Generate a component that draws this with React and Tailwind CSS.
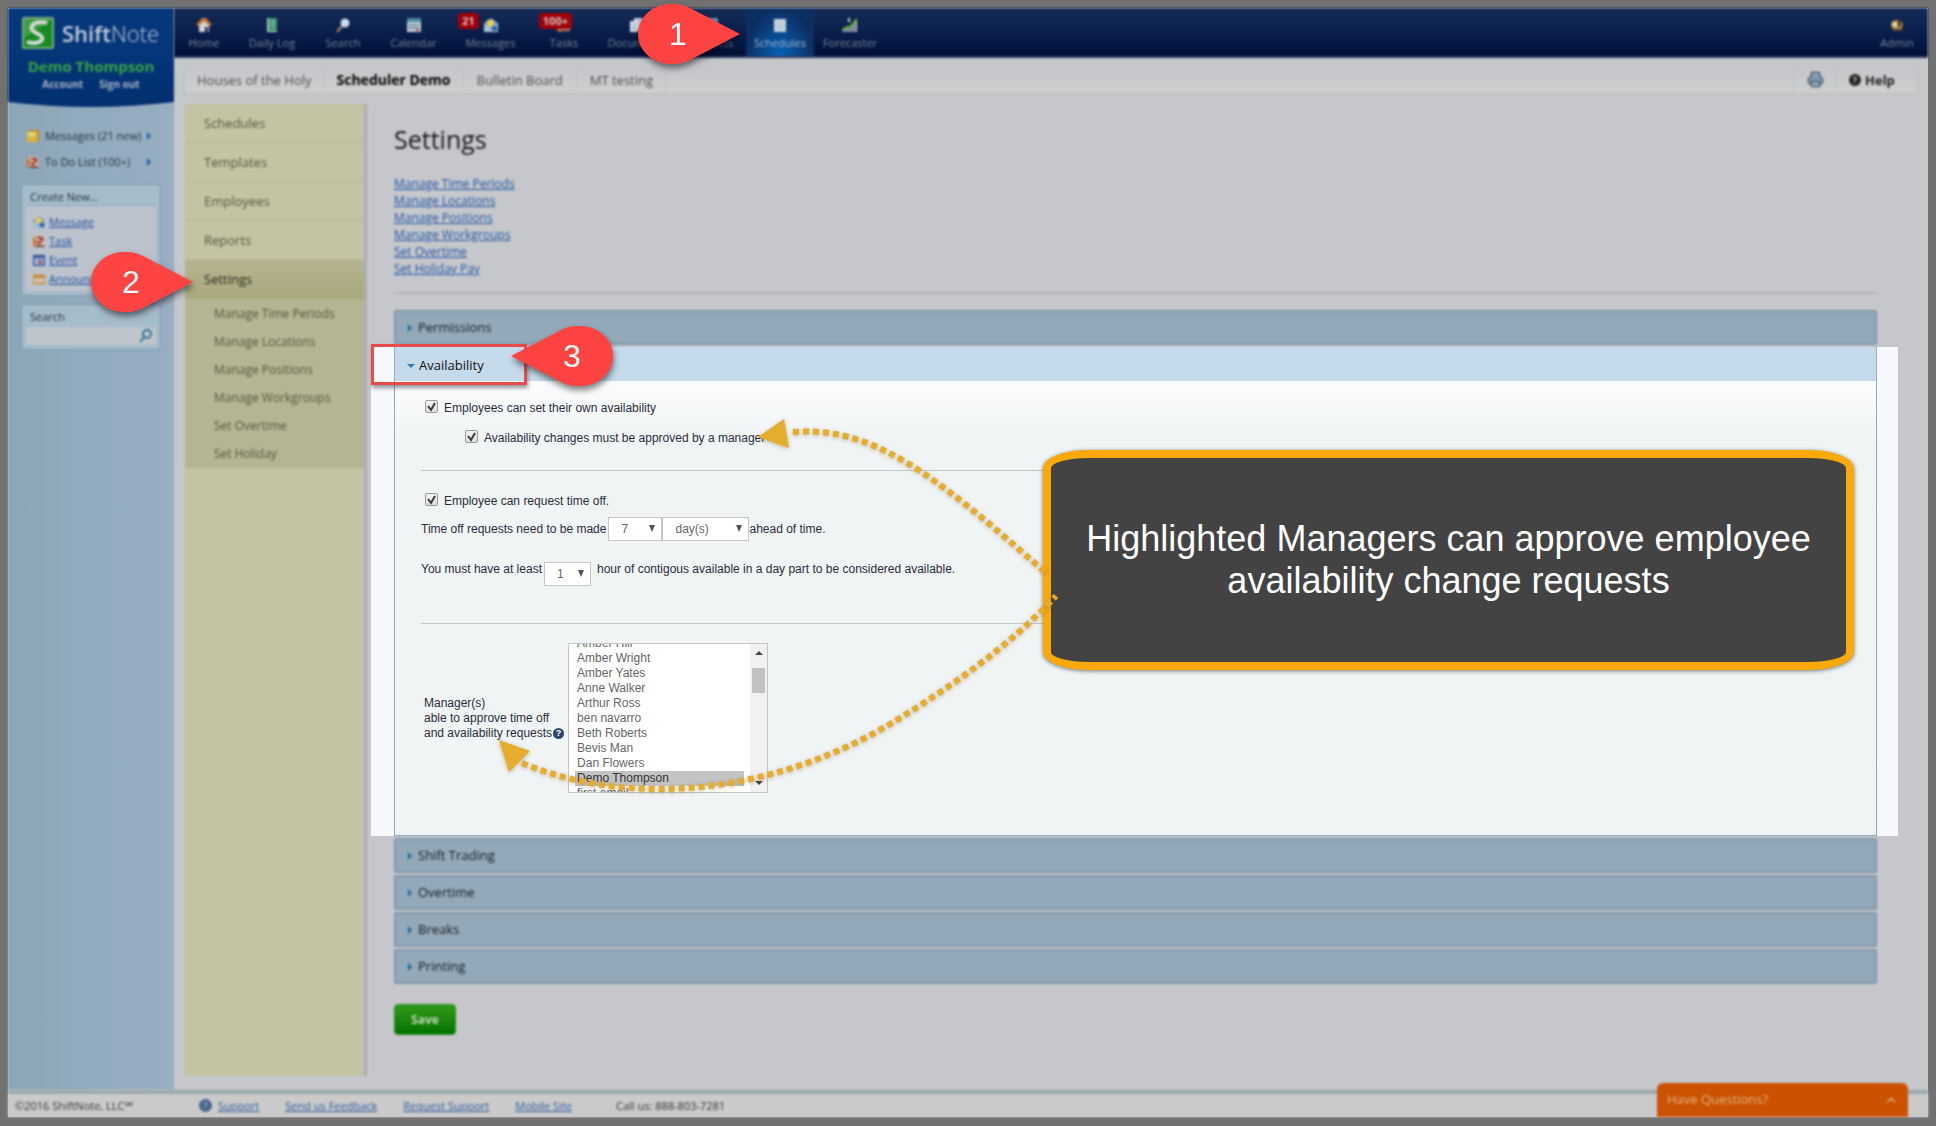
import { useEffect, useRef } from 'react';
import { Printer, ChevronUp } from 'lucide-react';

const topItems = [
  { label: 'Home', icon: 'home', width: 'w-[60px]' },
  { label: 'Daily Log', icon: 'book', width: 'w-[76px]' },
  { label: 'Search', icon: 'lens', width: 'w-[66px]' },
  { label: 'Calendar', icon: 'calendar', width: 'w-[75px]' },
  { label: 'Messages', icon: 'mail', width: 'w-[79px]', badge: '21', badgePos: 'right-5' },
  { label: 'Tasks', icon: 'task', width: 'w-[68px]', badge: '100+', badgePos: 'right-0' },
  { label: 'Documents', icon: 'docs', width: 'w-[78px]' },
  { label: 'Contacts', icon: 'contacts', width: 'w-[70px]' },
  { label: 'Schedules', icon: 'grid', width: 'w-[68px]', active: true },
  { label: 'Forecaster', icon: 'chart', width: 'w-[72px]' }
];

const sideItems = ['Schedules', 'Templates', 'Employees', 'Reports'];

const subItems = [
  'Manage Time Periods',
  'Manage Locations',
  'Manage Positions',
  'Manage Workgroups',
  'Set Overtime',
  'Set Holiday'
];

const settingLinks = [
  'Manage Time Periods',
  'Manage Locations',
  'Manage Positions',
  'Manage Workgroups',
  'Set Overtime',
  'Set Holiday Pay'
];

const managers = [
  'Amber Hill',
  'Amber Wright',
  'Amber Yates',
  'Anne Walker',
  'Arthur Ross',
  'ben navarro',
  'Beth Roberts',
  'Bevis Man',
  'Dan Flowers',
  'Demo Thompson',
  'first email'
];

const createItems = [
  { label: 'Message', icon: 'mail' },
  { label: 'Task', icon: 'task' },
  { label: 'Event', icon: 'event' },
  { label: 'Announce', icon: 'announce' }
];

const glyphs = {
  home: (
    <>
      <path d="M3 8v7h10V8L8 3z" fill="#d3d3d3" />
      <path d="M0 8 6 1h4l6 7-2 1-6-5-6 5z" fill="#c4762b" />
      <path d="M9 10h3v5H9z" fill="#27304a" />
    </>
  ),
  book: (
    <>
      <path d="M3 1h10v13H3z" fill="#3f8f74" />
      <path d="M3 1h2v14H3z" fill="#9fc8b8" />
      <path d="M7 4h4M7 7h4M8 10h2" stroke="#b9dccf" />
      <path d="M4 14h9v1H4z" fill="#ddd" />
    </>
  ),
  lens: (
    <>
      <path d="m7 9-5 6" stroke="#a7866b" strokeWidth="2" />
      <circle cx="10" cy="6" r="4" fill="#c9dcf0" stroke="#e2e2e2" />
    </>
  ),
  calendar: (
    <>
      <path d="M1 1h14v14H1z" fill="#c5ccd2" />
      <path d="M1 1h14v4H1z" fill="#4d8b9c" />
      <path d="M3 8h10M3 11h10" stroke="#5c7fa8" strokeWidth="2" strokeDasharray="2 1" />
      <path d="M10 12h3v2h-3z" fill="#b5523b" />
    </>
  ),
  mail: (
    <>
      <path d="M1 6 8 1l7 5v9H1z" fill="#6f9ac6" />
      <path d="M4 3h7v7H4z" fill="#e3cb62" />
      <path d="m1 7 6 5 8-6v9H1z" fill="#a9c3dc" />
      <path d="M9 9h5v5H9z" fill="#2c5fa3" />
    </>
  ),
  task: (
    <>
      <path d="M3 1h8l3 3v11H3z" fill="#c9b8b2" />
      <path d="M1 4h3v10H1z" fill="#c4762b" />
      <path d="M5 3h6l2 3H8z" fill="#9c3a2c" />
      <path d="m5 8 3 3 5-6" stroke="#b8321f" strokeWidth="2" fill="none" />
      <path d="M4 13h10v2H4z" fill="#6d4038" />
    </>
  ),
  docs: (
    <>
      <path d="M5 1h8l2 2v10H5z" fill="#b8c8dd" />
      <path d="M1 4h8v11H1z" fill="#dbe3ee" />
      <path d="M3 7h4M3 10h4M3 12h4" stroke="#7e94b5" />
    </>
  ),
  contacts: (
    <>
      <path d="M3 1h12v14H3z" fill="#6d93a6" />
      <circle cx="9" cy="6" r="2" fill="#dce5ea" />
      <path d="M5 12c0-4 8-4 8 0z" fill="#dce5ea" />
    </>
  ),
  grid: (
    <>
      <path d="M2 2h12v13H2z" fill="#c9d6e0" />
      <path d="M4 6h8M4 9h8M4 12h8M6 4v9M10 4v9" stroke="#b2c4d2" />
    </>
  ),
  chart: (
    <>
      <path d="M2 15v-3M5 15v-4M8 15V9M11 15V7M14 15V4" stroke="#b9c0c8" strokeWidth="2" />
      <path d="m0 13 5-3 3 0 7-8" stroke="#58a92e" strokeWidth="2" fill="none" />
      <path d="M6 1h2v4H6z" fill="#c8ccd2" />
    </>
  ),
  admin: (
    <>
      <ellipse cx="8" cy="8" rx="6" ry="5" fill="#a88642" />
      <path d="M4 12h9l1 2H3z" fill="#55452a" />
      <path d="M3 5h5v5H4z" fill="#dfd3a8" />
      <path d="M9 3h3v6H9z" fill="#4a3d28" />
    </>
  ),
  event: (
    <>
      <path d="M1 2h14v13H1z" fill="#3d5fa0" />
      <path d="M3 6h10v7H3z" fill="#c5d0e2" />
      <path d="M3 9h10M7 6v7M10 6v7" stroke="#5673ac" />
      <path d="M8 9h3v3H8z" fill="#b03c2c" />
    </>
  ),
  announce: (
    <>
      <path d="M1 3h14v11H1z" fill="#c98a3a" />
      <path d="M2 7h12v5H2z" fill="#d9cdb8" />
      <path d="M4 9h8" stroke="#8b97a8" strokeDasharray="2 1" />
    </>
  ),
  note: (
    <>
      <path d="M3 1h12v13H3z" fill="#b58f2a" />
      <path d="M1 3h12v12H1z" fill="#d6b640" />
      <path d="M2 4h9v4H2z" fill="#e6d684" />
    </>
  )
};

function Icon({ name, className }) {
  return (
    <svg viewBox="0 0 16 16" className={className} aria-hidden="true">
      {glyphs[name]}
    </svg>
  );
}

function Logo() {
  return (
    <a href="#" className="flex items-center gap-2 text-[22px] leading-8 text-[#c3cbd8]">
      <svg viewBox="0 0 33 33" className="size-8" aria-hidden="true">
        <rect width="33" height="33" rx="2" fill="#7dac7c" />
        <rect x="2" y="2" width="29" height="29" fill="#178a22" />
        <path d="M2 2h29L2 22z" fill="#3c9c45" />
        <path
          d="M26 6C15 4 9 7 10 12c1 5 11 5 11 10 0 4-7 6-16 4"
          fill="none"
          stroke="#d4dcd5"
          strokeWidth="4"
        />
      </svg>
      <span>
        <b className="font-semibold">Shift</b>
        <span className="font-light">Note</span>
      </span>
    </a>
  );
}

function TopBar() {
  return (
    <header className="flex h-[50px] justify-between border-b-2 border-[#2c3c60] bg-linear-to-b from-[#152b56] via-[#071a45] via-70% to-[#000e35] text-[11px] leading-3 text-[#76829b] blur-[1px]">
      <nav className="flex">
        {topItems.map((item) => (
          <a
            key={item.label}
            href="#"
            className={
              item.active
                ? `${item.width} flex flex-col items-center gap-1 bg-radial-[at_50%_100%] from-[#0562b8] to-[#0c2f62] to-70% pt-[9px] text-[#a3b6cf]`
                : `${item.width} flex flex-col items-center gap-1 pt-[9px]`
            }
          >
            <span className="relative">
              <Icon name={item.icon} className="size-4" />
              {item.badge && (
                <span className={`${item.badgePos} absolute -top-1 rounded-sm bg-[#a00008] px-1 text-[11px] leading-4 font-bold text-[#d6c3c5]`}>
                  {item.badge}
                </span>
              )}
            </span>
            {item.label}
          </a>
        ))}
      </nav>
      <a href="#" className="flex w-[62px] flex-col items-center gap-1 pt-[9px]">
        <Icon name="admin" className="size-4" />
        Admin
      </a>
    </header>
  );
}

function TabBar() {
  return (
    <div className="mx-[10px] mt-3 flex h-6 items-center border border-t-0 border-[#bbbcc0] bg-linear-to-b from-[#c6c7cb] to-[#cfcfcf] pb-1 text-[13px] leading-5 text-[#505050] blur-[1px]">
      <a href="#" className="border-r border-[#bbbcc0] px-3">Houses of the Holy</a>
      <a href="#" className="border-r border-[#bbbcc0] px-3 text-sm leading-5 font-bold text-black">
        Scheduler Demo
      </a>
      <a href="#" className="border-r border-[#bbbcc0] px-[13px]">Bulletin Board</a>
      <a href="#" className="border-r border-[#bbbcc0] px-[13px]">MT testing</a>
      <button type="button" aria-label="Print" className="ml-auto flex h-5 w-11 items-center justify-center border-x border-[#bbbcc0]">
        <Printer className="size-[17px] fill-[#8fa6bd] text-[#4c5a68]" />
      </button>
      <a href="#" className="flex w-20 items-center gap-1 pl-3 font-bold text-[#222]">
        <span className="flex size-3 items-center justify-center rounded-full bg-[#222] text-[9px] leading-3 text-[#cfcfcf]">?</span>
        Help
      </a>
    </div>
  );
}

function LeftColumn() {
  return (
    <aside className="w-[166px] shrink-0 bg-linear-to-r from-[#8ca7b8] to-[#98aec3] text-[11px] text-[#23303c] blur-[1px]">
      <div className="relative h-[94px] bg-linear-to-b from-[#05377a] from-40% to-[#033070] pt-[9px] pl-[14px]">
        <Logo />
        <div className="mt-[7px] -ml-[14px] text-center text-[15px] leading-5 font-bold text-[#37a546]">Demo Thompson</div>
        <div className="-ml-[14px] flex justify-center gap-4 text-[10px] leading-4 font-bold text-[#a9b5c9]">
          <a href="#">Account</a>
          <a href="#">Sign out</a>
        </div>
        <svg viewBox="0 0 166 6" preserveAspectRatio="none" className="absolute top-full left-0 h-[6px] w-full" aria-hidden="true">
          <path d="M0 0h166Q83 10 0 0" fill="#033070" />
        </svg>
      </div>

      <div className="mt-[26px] flex w-[143px] flex-col gap-[10px] pl-[18px] leading-4">
        <a href="#" className="flex items-center gap-[5px]">
          <Icon name="note" className="size-[14px]" />
          Messages (21 new)
          <i className="ml-auto border-y-4 border-l-4 border-y-transparent border-l-[#1c62a8]" />
        </a>
        <a href="#" className="flex items-center gap-[5px]">
          <Icon name="task" className="size-[14px]" />
          To Do List (100+)
          <i className="ml-auto border-y-4 border-l-4 border-y-transparent border-l-[#1c62a8]" />
        </a>
      </div>

      <section className="mx-[13px] mt-[14px] rounded-sm border border-[#7e9aad] bg-[#a5bccb] p-1">
        <h2 className="pl-1 text-[11px] leading-4">Create New...</h2>
        <ul className="flex flex-col gap-[3px] border-t border-[#8ea8b8] bg-[#bdc3cc] pt-2 pb-1 pl-[6px]">
          {createItems.map((item) => (
            <li key={item.label} className="flex items-center gap-[3px] text-[11px] leading-4">
              <Icon name={item.icon} className="size-[14px]" />
              <a href="#" className="text-[#1c4fa0] underline">{item.label}</a>
            </li>
          ))}
        </ul>
      </section>

      <section className="mx-[13px] mt-2 rounded-sm border border-[#7e9aad] bg-[#a5bccb] p-1">
        <label htmlFor="quick-search" className="block pl-1 text-[11px] leading-4">Search</label>
        <div className="mt-[2px] flex h-[18px] items-center bg-[#bec5cb]">
          <input id="quick-search" type="text" className="w-full min-w-0 px-1 outline-none" />
          <button type="button" aria-label="Search">
            <svg viewBox="0 0 16 16" className="mr-[2px] size-4" aria-hidden="true">
              <circle cx="9" cy="6" r="4" fill="none" stroke="#2e7099" strokeWidth="2" />
              <path d="m6 9-4 5" stroke="#2e7099" strokeWidth="2" />
            </svg>
          </button>
        </div>
      </section>
    </aside>
  );
}

function SideNav() {
  return (
    <nav className="w-[182px] shrink-0 border-r-[3px] border-[#abadb0] bg-[#c4c3a4] text-[13px] text-[#55563f] blur-[1px]">
      {sideItems.map((item) => (
        <a key={item} href="#" className="block h-[39px] border-b border-[#b8b895] pl-[19px] leading-[39px]">
          {item}
        </a>
      ))}
      <a href="#" className="block h-[39px] bg-linear-to-b from-[#b5b48f] to-[#a9a97f] pl-[19px] leading-[39px] font-medium text-[#262719]">
        Settings
      </a>
      <div className="bg-[#b5b593] pt-px text-[12px] leading-7">
        {subItems.map((item) => (
          <a key={item} href="#" className="block pl-[29px]">{item}</a>
        ))}
      </div>
    </nav>
  );
}

function Bar({ title }) {
  return (
    <button
      type="button"
      className="flex h-[35px] w-full items-center gap-[6px] rounded-xs border-2 border-[#8099ac] bg-[#93a8b8] pl-3 text-[13px] font-medium text-[#141c24] blur-[1px]"
    >
      <i className="border-y-4 border-l-4 border-y-transparent border-l-[#1c6a9c]" />
      {title}
    </button>
  );
}

function Check({ id, label }) {
  return (
    <div className="flex h-5 items-center gap-[6px] pl-1">
      <span className="relative -mt-1 size-[13px]">
        <input
          id={id}
          type="checkbox"
          defaultChecked
          className="peer block size-[13px] appearance-none rounded-xs border border-[#9b9b9b] bg-linear-to-b from-[#f2f2f2] to-[#dcdcdc]"
        />
        <svg viewBox="0 0 13 13" className="pointer-events-none absolute inset-0 hidden peer-checked:block" aria-hidden="true">
          <path d="m3 6 3 4 4-7" fill="none" stroke="#3c3c3c" strokeWidth="2" />
        </svg>
      </span>
      <label htmlFor={id}>{label}</label>
    </div>
  );
}

function Drop({ id, label, value, className }) {
  return (
    <span className="relative flex">
      <select id={id} aria-label={label} className={`${className} h-6 appearance-none border border-[#c6c6c6] bg-white pl-3 text-[#666]`}>
        <option>{value}</option>
      </select>
      <i className="pointer-events-none absolute top-2 right-[7px] border-x-[3px] border-t-[7px] border-x-transparent border-t-[#555]" />
    </span>
  );
}

function ManagerList() {
  const ref = useRef(null);

  // keep the chosen manager in view near the bottom of the box
  useEffect(() => {
    ref.current.scrollTop = 8;
  }, []);

  return (
    <div className="relative flex h-[150px] w-[200px] border border-[#c3c6c6] bg-white">
      <select
        ref={ref}
        id="managers"
        multiple
        defaultValue={['Demo Thompson']}
        className="h-full flex-1 overflow-y-scroll pl-[6px] text-[#666] outline-none [scrollbar-width:none]"
      >
        {managers.map((name) => (
          <option key={name} className="h-[15px] min-h-0 p-0 px-[2px] leading-[15px] checked:bg-[#c4c4c4] checked:bg-linear-to-r checked:from-[#c4c4c4] checked:to-[#c4c4c4] checked:text-[#333]">
            {name}
          </option>
        ))}
      </select>
      <div className="ml-[6px] flex w-[17px] flex-col items-center justify-between bg-[#f1f1f1] py-[7px]">
        <i className="border-x-4 border-b-4 border-x-transparent border-b-[#444]" />
        <i className="-mt-[76px] h-[25px] w-[13px] bg-[#c1c1c1]" />
        <i className="border-x-4 border-t-4 border-x-transparent border-t-[#444]" />
      </div>
    </div>
  );
}

function Availability() {
  return (
    <section className="-mr-[21px] -ml-[23px] bg-[#f6f8fe] pr-[21px] pl-[23px]">
      <button type="button" className="flex h-[34px] w-full items-center gap-1 border-x border-[#8fb0c2] bg-[#c5daeb] pt-[3px] pl-3 text-[13px] text-[#111]">
        <i className="border-x-4 border-t-4 border-x-transparent border-t-[#2b7fb0]" />
        Availability
      </button>
      <div className="border-x border-b border-[#8fa9b8] bg-linear-to-b from-[#fbfcfd] to-[#f0f4f5] to-[60px] pt-[17px] pr-[26px] pb-[42px] pl-[26px] font-['Liberation_Sans',Arial,sans-serif] text-[12px] leading-[15px] text-[#2c2c3c]">
        <Check id="own-availability" label="Employees can set their own availability" />
        <div className="mt-[10px] pl-10">
          <Check id="approve-changes" label="Availability changes must be approved by a manager" />
        </div>
        <hr className="mt-[22px] border-[#c3c8cb]" />
        <div className="mt-5">
          <Check id="request-off" label="Employee can request time off." />
        </div>
        <div className="mt-[6px] flex items-center">
          <label htmlFor="ahead-count" className="mr-[2px]">Time off requests need to be made</label>
          <Drop id="ahead-count" label="Count" value="7" className="w-[54px]" />
          <Drop id="ahead-unit" label="Unit" value="day(s)" className="w-[87px]" />
          ahead of time.
        </div>
        <div className="mt-[21px] flex items-start">
          <label htmlFor="min-hours" className="mr-[2px]">You must have at least</label>
          <Drop id="min-hours" label="Hours" value="1" className="w-[47px]" />
          <span className="ml-[6px]">hour of contigous available in a day part to be considered available.</span>
        </div>
        <hr className="mt-[37px] border-[#c3c8cb]" />
        <div className="mt-[19px] flex items-center gap-px pl-[3px]">
          <label htmlFor="managers">
            Manager(s)
            <br />
            able to approve time off
            <br />
            and availability requests
          </label>
          <button type="button" aria-label="Help" className="mt-[30px] mr-[3px] flex size-[11px] items-center justify-center rounded-full bg-[#2b4470] text-[9px] font-bold text-white">
            ?
          </button>
          <ManagerList />
        </div>
      </div>
    </section>
  );
}

function Pin({ number, flip, className }) {
  return (
    <div className={`absolute h-[60px] w-[102px] drop-shadow-[1px_4px_3px_rgba(0,0,0,0.5)] ${className}`}>
      <svg viewBox="0 0 102 60" className={flip ? 'size-full -scale-x-100' : 'size-full'} aria-hidden="true">
        <path d="M102 30 52 4C27-8 0 7 0 30s27 38 52 26z" fill="#fe4343" />
      </svg>
      <span
        className={
          flip
            ? "absolute inset-y-0 right-0 w-[82px] text-center font-['Liberation_Sans',Arial,sans-serif] text-[32px] leading-[60px] text-white"
            : "absolute inset-y-0 left-0 w-20 text-center font-['Liberation_Sans',Arial,sans-serif] text-[32px] leading-[60px] text-white"
        }
      >
        {number}
      </span>
    </div>
  );
}

function Annotations() {
  return (
    <>
      <div className="absolute top-[344px] left-[371px] h-[41px] w-[156px] border-[3px] border-[#e94b4b] shadow-[1px_3px_4px_rgba(0,0,0,0.4)]" />
      <Pin number="1" className="top-1 left-[638px]" />
      <Pin number="2" className="top-[252px] left-[91px]" />
      <Pin number="3" flip className="top-[326px] left-[511px]" />
      <div className="absolute top-[450px] left-[1043px] flex h-[220px] w-[811px] items-center justify-center rounded-[46px/18px] border-8 border-[#f9a90a] bg-[#434343] text-center font-['Liberation_Sans',Arial,sans-serif] text-[36px] leading-[42px] text-white shadow-[0_1px_4px_rgba(0,0,0,0.5)]">
        <p>
          Highlighted Managers can approve employee
          <br />
          availability change requests
        </p>
      </div>
      <svg
        viewBox="480 400 600 410"
        className="pointer-events-none absolute top-[400px] left-[480px] h-[410px] w-[600px] drop-shadow-[0_1px_2px_rgba(120,80,0,0.4)]"
        aria-hidden="true"
      >
        <g fill="none" stroke="#e6ac2e" strokeWidth="6" strokeDasharray="6 4">
          <path d="M793 432C870 426 930 470 1046 573" />
          <path d="M522 763C640 812 790 790 908 713C960 680 1010 645 1056 596" />
        </g>
        <g fill="#e6ac2e">
          <path d="m758 437 26-18 5 29z" />
          <path d="m499 740 31 11-21 21z" />
        </g>
      </svg>
    </>
  );
}

export default function App() {
  return (
    <div className="relative flex min-h-screen flex-col bg-[#717171] p-2 pb-[9px] font-['Open_Sans','Noto_Sans',sans-serif]">
      <div className="flex flex-1 flex-col bg-[#c6c7cb]">
        <div className="flex flex-1">
          <LeftColumn />
          <div className="flex min-w-0 flex-1 flex-col">
            <TopBar />
            <TabBar />
            <div className="mt-[10px] mb-[14px] ml-[11px] flex flex-1">
              <SideNav />
              <main className="min-w-0 flex-1 pr-[51px] pl-[27px]">
                <div className="blur-[1px]">
                  <h1 className="pt-[19px] text-[25px] leading-8 text-[#1a1a1a]">Settings</h1>
                  <ul className="mt-5 text-[12px] leading-[17px]">
                    {settingLinks.map((link) => (
                      <li key={link}>
                        <a href="#" className="text-[#1f55a5] underline">{link}</a>
                      </li>
                    ))}
                  </ul>
                  <hr className="mt-[15px] border-t-2 border-[#b3b5b9]" />
                </div>
                <div className="mt-4 flex flex-col gap-[2px]">
                  <Bar title="Permissions" />
                  <Availability />
                  <Bar title="Shift Trading" />
                  <Bar title="Overtime" />
                  <Bar title="Breaks" />
                  <Bar title="Printing" />
                </div>
                <button
                  type="button"
                  className="mt-5 h-[31px] w-[62px] rounded-sm border border-[#2f8a22] bg-linear-to-b from-[#2f9a1a] to-[#007200] text-[12px] font-bold text-[#bcd6b6] blur-[1px]"
                >
                  Save
                </button>
              </main>
            </div>
          </div>
        </div>
        <footer className="flex h-[27px] items-center border-t-4 border-[#9ba8ad] bg-[#cacaca] pl-[7px] text-[11px] leading-4 text-[#333] blur-[1px]">
          <span className="w-[184px]">©2016 ShiftNote, LLC℠</span>
          <span className="mr-[6px] flex size-[13px] items-center justify-center rounded-full bg-[#46658f] text-[9px] text-[#cacaca]">?</span>
          <nav className="flex gap-[26px] text-[#2c5a9c]">
            <a href="#" className="underline">Support</a>
            <a href="#" className="underline">Send us Feedback</a>
            <a href="#" className="underline">Request Support</a>
            <a href="#" className="underline">Mobile Site</a>
          </nav>
          <span className="ml-11">Call us: 888-803-7281</span>
        </footer>
      </div>
      <button
        type="button"
        className="absolute right-7 bottom-[9px] flex h-[34px] w-[251px] items-center justify-between rounded-t-md bg-[#cb5200] px-[10px] text-[13px] font-medium text-[#e0b485] blur-[1px]"
      >
        Have Questions?
        <ChevronUp className="size-[14px]" />
      </button>
      <Annotations />
    </div>
  );
}
